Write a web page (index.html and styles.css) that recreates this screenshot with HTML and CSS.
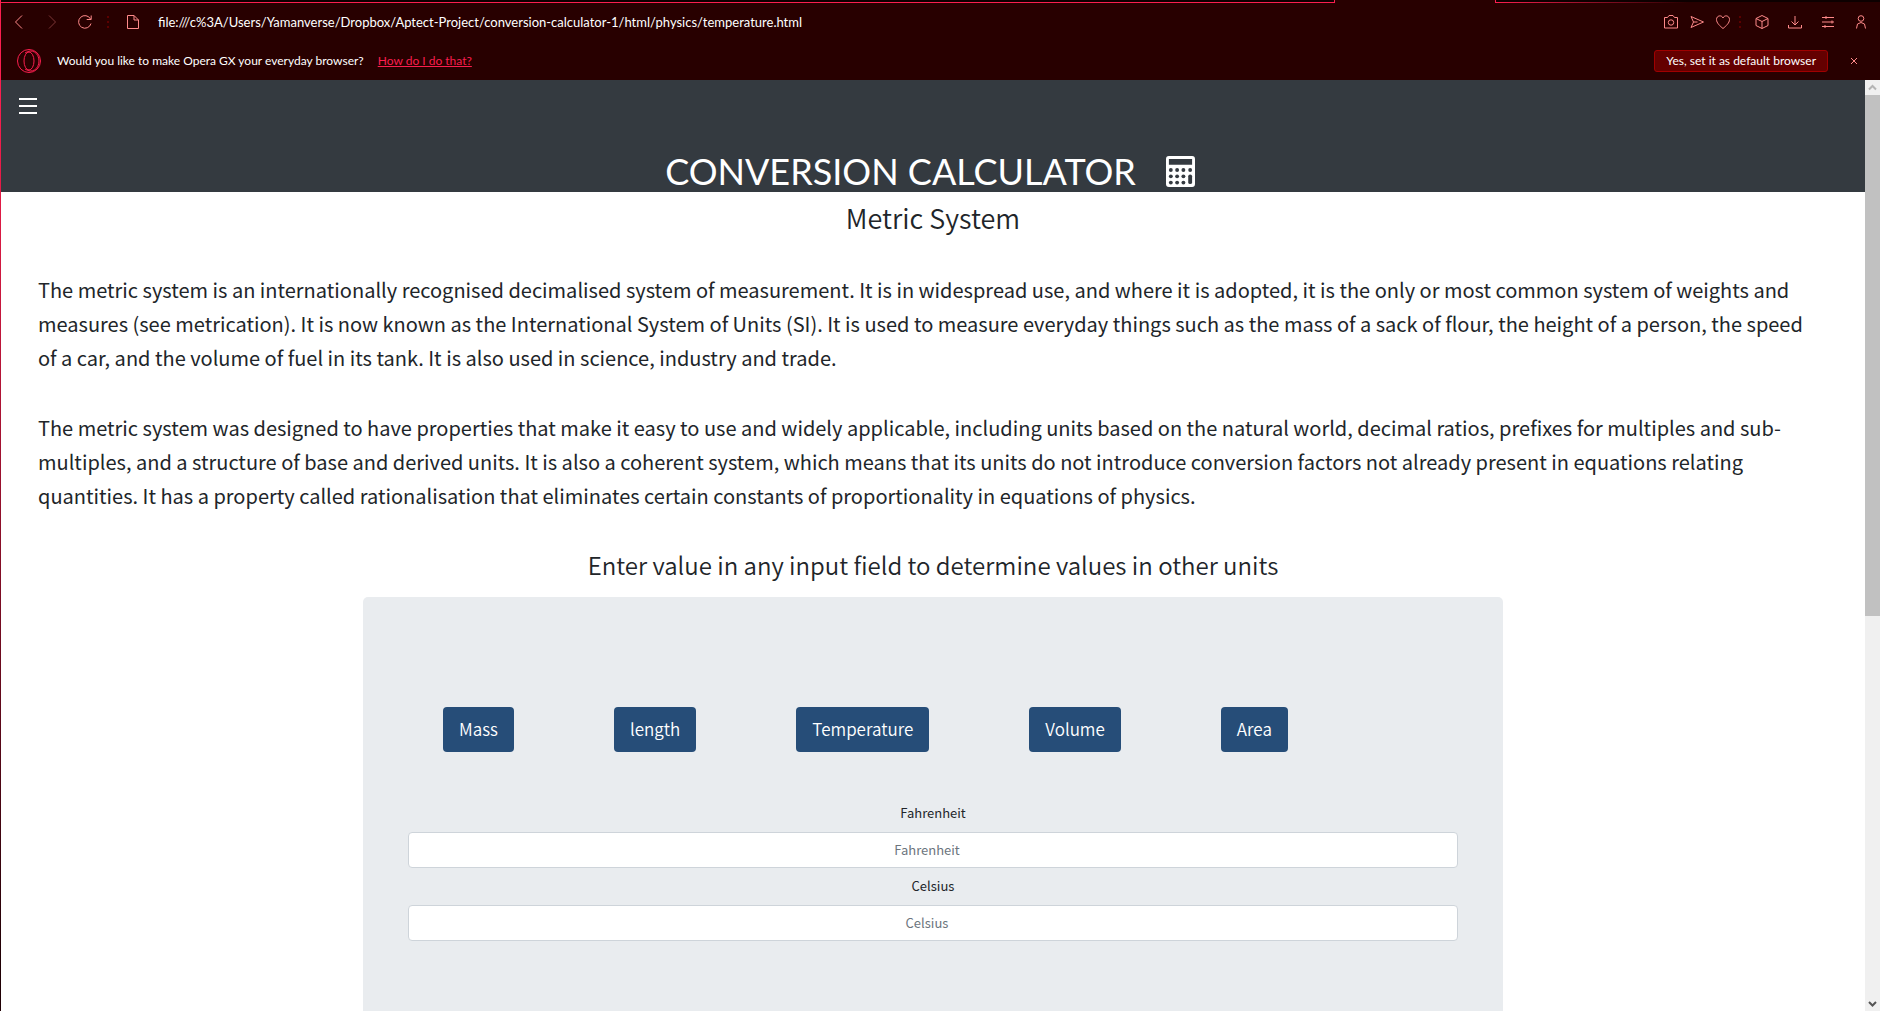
FILE: index.html
```html
<!DOCTYPE html>
<html lang="en">
<head>
<meta charset="utf-8">
<title>Conversion Calculator</title>
<link rel="stylesheet" href="styles.css">
</head>
<body>
<div class="window">
  <div class="tab-edge"><span class="edge-left"></span><span class="edge-right"></span></div>
  <div class="toolbar">
    <nav class="nav-buttons">
      <button class="icon-btn" aria-label="Back"><svg width="16" height="16" viewBox="0 0 16 16"><path d="M11 1.500L4.500 8l6.500 6.500"/></svg></button>
      <button class="icon-btn dim" aria-label="Forward"><svg width="16" height="16" viewBox="0 0 16 16"><path d="M5 1.500L11.500 8 5 14.500"/></svg></button>
      <button class="icon-btn" aria-label="Reload"><svg width="16" height="16" viewBox="0 0 16 16"><path d="M13.500 5A6.300 6.300 0 1 0 14 9.500M14.200 1.500V5.500H9.700"/></svg></button>
    </nav>
    <span class="dots"><i></i><i></i><i></i></span>
    <svg class="page-icon" width="16" height="16" viewBox="0 0 16 16"><path d="M2.500 1.500h6.500l4.500 4.500v8.500h-11zM9 1.500V6h4.500"/></svg>
    <span class="url">file:///c%3A/Users/Yamanverse/Dropbox/Aptect-Project/conversion-calculator-1/html/physics/temperature.html</span>
    <div class="tools">
      <button class="icon-btn" aria-label="Snapshot"><svg width="16" height="16" viewBox="0 0 16 16"><path d="M1.500 3.500h3l1.500-2h4l1.500 2h3v10.500h-13z"/><circle cx="8" cy="8.500" r="2.700"/></svg></button>
      <button class="icon-btn" aria-label="My Flow"><svg width="16" height="16" viewBox="0 0 16 16"><path d="M2 2.500L14.500 8 2 13.500 4.500 8zM4.500 8h4"/></svg></button>
      <button class="icon-btn" aria-label="Bookmark"><svg width="16" height="16" viewBox="0 0 16 16"><path d="M8 14.500C5 12 1.500 9 1.500 5.500c0-4 5-5 6.500-1.500 1.500-3.500 6.500-2.500 6.500 1.500C14.500 9 11 12 8 14.500z"/></svg></button>
      <span class="dots"><i></i><i></i><i></i></span>
      <button class="icon-btn" aria-label="Extensions"><svg width="16" height="16" viewBox="0 0 16 16"><path d="M8 1.500l6 3v7l-6 3-6-3v-7zM2 4.500l6 3 6-3M8 7.500v7"/></svg></button>
      <button class="icon-btn" aria-label="Downloads"><svg width="16" height="16" viewBox="0 0 16 16"><path d="M8 2v8.500M4.500 7.500L8 11l3.500-3.500M1.500 11v3h13v-3"/></svg></button>
      <button class="icon-btn" aria-label="Easy setup"><svg width="16" height="16" viewBox="0 0 16 16"><path d="M2 3.500h12M2 8h12M2 12.500h12M6 2v3M12 6.500v3M5 11v3"/></svg></button>
      <button class="icon-btn" aria-label="Profile"><svg width="16" height="16" viewBox="0 0 16 16"><circle cx="8" cy="4.500" r="2.800"/><path d="M3.500 14.500l1-4.500L8 8.500l3.500 1.500 1 4.500"/></svg></button>
    </div>
  </div>
  <div class="notice">
    <svg class="opera" width="26" height="26" viewBox="0 0 26 26"><circle cx="13" cy="13" r="11.500"/><ellipse cx="13" cy="13" rx="5" ry="9"/><path d="M9 5C16 0 23 5 23 13S16 26 9 21"/></svg>
    <span class="question">Would you like to make Opera GX your everyday browser?</span>
    <a class="how" href="#">How do I do that?</a>
    <button class="default-btn">Yes, set it as default browser</button>
    <button class="icon-btn close" aria-label="Close"><svg width="8" height="8" viewBox="0 0 8 8"><path d="M1 1l6 6M7 1L1 7"/></svg></button>
  </div>
  <div class="viewport">
    <main class="page">
      <header class="site-header">
        <button class="menu" aria-label="Open menu"><svg width="18" height="18" viewBox="0 0 18 18"><path d="M0 2h18M0 9h18M0 16h18"/></svg></button>
        <h1 class="brand">CONVERSION CALCULATOR
          <svg width="29" height="31" viewBox="0 0 30 32"><path fill="#fff" fill-rule="evenodd" d="M3 0h24q3 0 3 3v26q0 3-3 3H3q-3 0-3-3V3q0-3 3-3zM3 3v6h24V3z"/><g fill="#343a40"><circle cx="5" cy="14.500" r="2"/><circle cx="11.500" cy="14.500" r="2"/><circle cx="18" cy="14.500" r="2"/><circle cx="25" cy="14.500" r="2"/><circle cx="5" cy="21" r="2"/><circle cx="11.500" cy="21" r="2"/><circle cx="18" cy="21" r="2"/><circle cx="5" cy="27.500" r="2"/><circle cx="11.500" cy="27.500" r="2"/><circle cx="18" cy="27.500" r="2"/><rect x="23" y="19" width="4" height="10" rx="2"/></g></svg>
        </h1>
      </header>
      <section class="intro">
        <h2 class="heading">Metric System</h2>
        <p class="copy">The metric system is an internationally recognised decimalised system of measurement. It is in widespread use, and where it is adopted, it is the only or most common system of weights and measures (see metrication). It is now known as the International System of Units (SI). It is used to measure everyday things such as the mass of a sack of flour, the height of a person, the speed of a car, and the volume of fuel in its tank. It is also used in science, industry and trade.</p>
        <p class="copy">The metric system was designed to have properties that make it easy to use and widely applicable, including units based on the natural world, decimal ratios, prefixes for multiples and sub-multiples, and a structure of base and derived units. It is also a coherent system, which means that its units do not introduce conversion factors not already present in equations relating quantities. It has a property called rationalisation that eliminates certain constants of proportionality in equations of physics.</p>
        <h3 class="prompt">Enter value in any input field to determine values in other units</h3>
      </section>
      <section class="panel">
        <div class="units">
          <button class="unit">Mass</button>
          <button class="unit">length</button>
          <button class="unit">Temperature</button>
          <button class="unit">Volume</button>
          <button class="unit">Area</button>
        </div>
        <form class="fields">
          <label class="label" for="fahrenheit">Fahrenheit</label>
          <input class="field" id="fahrenheit" type="text" placeholder="Fahrenheit">
          <label class="label" for="celsius">Celsius</label>
          <input class="field" id="celsius" type="text" placeholder="Celsius">
        </form>
      </section>
    </main>
    <div class="scrollbar">
      <svg class="arrow up" width="15" height="15" viewBox="0 0 15 15"><path d="M4 9.500L7.500 6 11 9.500"/></svg>
      <div class="thumb"></div>
      <svg class="arrow down" width="15" height="15" viewBox="0 0 15 15"><path d="M4 6L7.500 9.500 11 6"/></svg>
    </div>
  </div>
</div>
</body>
</html>
```
FILE: styles.css
```css
* { box-sizing: border-box; }
body { margin: 0; background: #fff; color: #212529; font-family: "Noto Sans CJK SC", "Noto Sans", sans-serif; }
button { font-family: inherit; cursor: pointer; }
h1, h2, h3, p { margin: 0; font-weight: 400; }

.window { height: 100vh; display: flex; flex-direction: column; overflow: hidden; border-left: 1px solid; border-image: linear-gradient(#fa1e4e 10%, #200005 95%) 1; background: #280000; }

/* Browser chrome */
.tab-edge { height: 3px; display: flex; justify-content: space-between; }
.edge-left { width: 71%; background: #0d0000; border-bottom: 1px solid #fa1e4e; border-right: 1px solid #fa1e4e; }
.edge-right { width: 20.500%; border-left: 1px solid #fa1e4e; background: linear-gradient(90deg, #fa1e4e, #280000 50%) bottom / 100% 1px no-repeat #0d0000; }
.toolbar { height: 38px; display: flex; align-items: center; padding: 0 11px 0 10px; }
.icon-btn { display: flex; padding: 0; border: 0; background: none; }
svg { display: block; flex: none; fill: none; }
.icon-btn svg, .page-icon { stroke: #ff8a8a; }
.nav-buttons { display: flex; gap: 17px; }
.dim { opacity: .4; }
.dots { display: flex; flex-direction: column; gap: 3px; margin: 0 14px; }
.dots i { width: 2px; height: 2px; background: #5c0000; }
.page-icon { margin-left: 2px; }
.url { margin-left: 17px; color: #fff; font: 13px/18px Lato, sans-serif; white-space: nowrap; }
.tools { margin-left: auto; display: flex; align-items: center; }
.tools .icon-btn { margin-left: 10px; }
.tools .dots { margin: 0 3px 0 8px; }
.tools .dots ~ .icon-btn + .icon-btn { margin-left: 17px; }
.notice { height: 39px; display: flex; align-items: center; padding: 0 22px 0 15px; color: #fff; font: 12px/18px Lato, sans-serif; }
.opera { stroke: #fa1e4e; }
.question { margin-left: 15px; }
.how { margin-left: 14px; color: #fa1e4e; }
.default-btn { margin-left: auto; height: 22px; padding: 0 11px; border: 1px solid #a00000; border-radius: 3px; background: #640000; color: #fff; font-size: 12px; line-height: 18px; }
.close { margin-left: 22px; }

/* Page */
.viewport { flex: 1; min-height: 0; display: flex; background: #fff; }
.page { flex: 1; min-width: 0; display: flex; flex-direction: column; overflow: hidden; }
.site-header { height: 112px; flex: none; display: flex; flex-direction: column; justify-content: space-between; background: #343a40; }
.menu { width: 18px; margin: 17px 0 0 18px; padding: 0; border: 0; background: none; }
.menu svg { stroke: #fff; stroke-width: 2; }
.brand { display: flex; justify-content: center; align-items: center; gap: 30px; padding: 0 6px 1px 0; color: #fff; font: 400 36px/40px Lato, sans-serif; }
.intro { flex: none; display: flex; flex-direction: column; gap: 36px; padding: 7px 48px 16px 37px; }
.heading { font-size: 27px; font-weight: 350; line-height: 38px; text-align: center; margin-right: -11px; }
.copy { font-size: 20px; line-height: 34px; }
.prompt { font-size: 24px; font-weight: 350; line-height: 32px; text-align: center; margin-right: -11px; }
.panel { flex: 1; min-height: 414px; width: 1140px; max-width: 100%; margin: 0 auto; padding: 110px 45px 0; border-radius: 5px 5px 0 0; background: #e9ecef; }
.units { display: flex; gap: 100px; padding: 0 35px; }
.unit { height: 45px; padding: 0 16px 2px; border: 0; border-radius: 4px; background: #264d78; color: #fff; font-size: 17px; font-weight: 350; }
.fields { display: flex; flex-direction: column; margin-top: 49px; text-align: center; }
.label { font-size: 13px; line-height: 24px; margin-bottom: 7px; }
.field { height: 36px; margin-bottom: 6px; border: 1px solid #ced4da; border-radius: 4px; padding: 0 24px 2px 12px; background: #fff; font: 13px "Noto Sans CJK SC", sans-serif; text-align: center; }
.field::placeholder { color: #6c757d; opacity: 1; }

.scrollbar { width: 15px; flex: none; display: flex; flex-direction: column; background: #f0f0f0; }
.arrow { stroke: #555; stroke-width: 2; }
.arrow.up { stroke: #b4b4b4; }
.thumb { height: 56%; background: #c1c1c1; }
.arrow.down { margin-top: auto; }
```
